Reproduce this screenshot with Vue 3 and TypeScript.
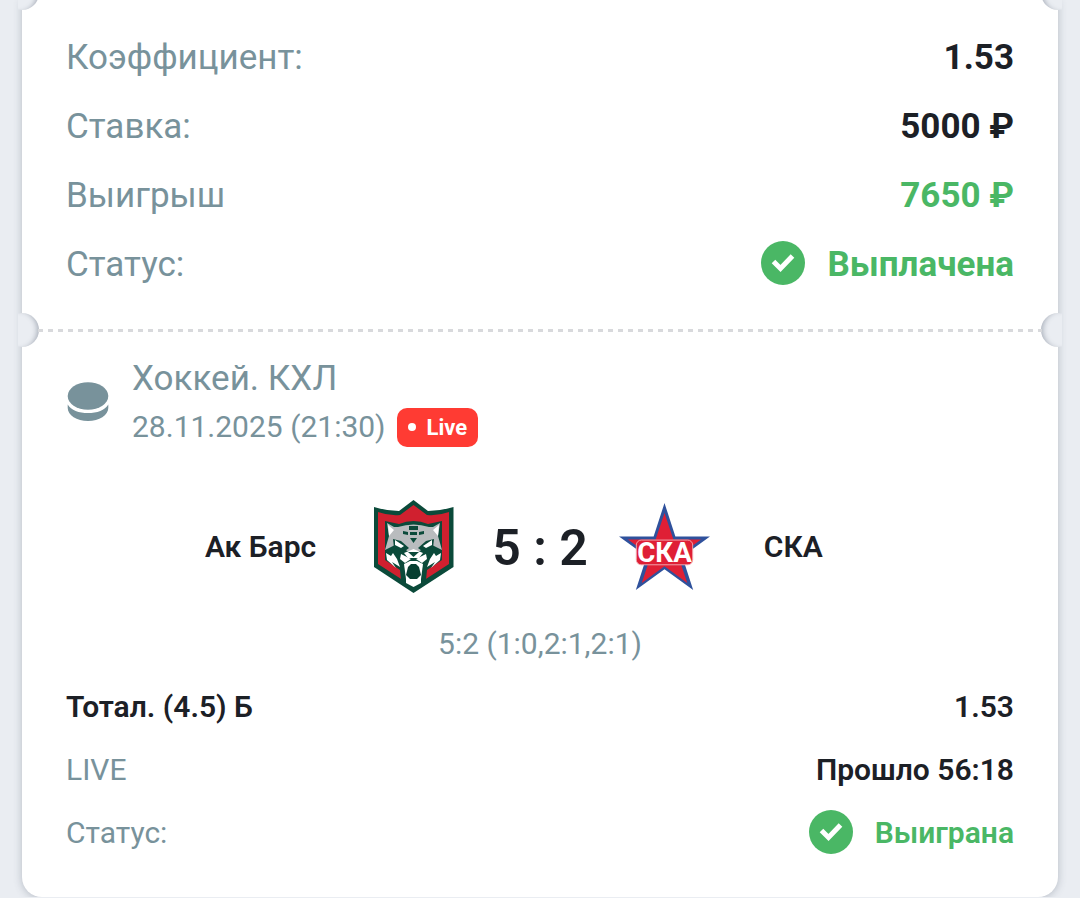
<script setup lang="ts">
interface Row {
  label: string
  value: string
  tone?: 'win'
  check?: boolean
  strong?: boolean
}

const summary: Row[] = [
  { label: 'Коэффициент:', value: '1.53' },
  { label: 'Ставка:', value: '5000 ₽' },
  { label: 'Выигрыш', value: '7650 ₽', tone: 'win' },
  { label: 'Статус:', value: 'Выплачена', tone: 'win', check: true },
]

const outcome: Row[] = [
  { label: 'Тотал. (4.5) Б', value: '1.53', strong: true },
  { label: 'LIVE', value: 'Прошло 56:18' },
  { label: 'Статус:', value: 'Выиграна', tone: 'win', check: true },
]
</script>

<template>
  <main class="page">
    <article class="ticket">
      <div class="notches notches-top"><i class="notch left"></i><i class="notch right"></i></div>

      <dl class="rows summary">
        <div v-for="row in summary" :key="row.label" class="row">
          <dt>{{ row.label }}</dt>
          <dd :class="row.tone">
            <svg v-if="row.check" class="check" viewBox="0 0 44 44" aria-hidden="true">
              <circle cx="22" cy="22" r="22" fill="#4ab765" />
              <path d="M12.5 20.5L19.5 27.5L31.5 15" fill="none" stroke="#fff" stroke-width="5" />
            </svg>
            {{ row.value }}
          </dd>
        </div>
      </dl>

      <div class="notches"><i class="notch left"></i><i class="notch right"></i><div class="dashes"></div></div>

      <section class="event">
        <header class="head">
          <svg class="puck" viewBox="0 0 42 40" aria-hidden="true">
            <ellipse cx="22" cy="14" rx="20.3" ry="13.7" fill="#78929b" />
            <path d="M1.700 22.500C5 28.500 13 31 22 31S39 28.500 42.300 22.500V26C42.300 33 33.300 39 22 39S1.700 33 1.700 26Z" fill="#78929b" />
          </svg>
          <div>
            <h2>Хоккей. КХЛ</h2>
            <p class="date"><time datetime="2025-11-28T21:30">28.11.2025 (21:30)</time><span class="live"><i></i>Live</span></p>
          </div>
        </header>

        <div class="match">
          <div class="team home">
            <b>Ак Барс</b>
            <svg class="logo bars" viewBox="0 0 80 94" aria-hidden="true">
              <path d="M39.500 0L54 11Q66 11 79.500 7V67L39.500 93L0 67V7Q13 11 25 11Z" fill="#0b4a3a" />
              <path d="M39.500 5L53 15Q64 16 75 12V64L39.500 87L4 64V12Q15 16 26 15Z" fill="#d0202f" />
              <path d="M11 21L25 24Q39.500 18 54 24L68 21V60L53 70L52 80L39.500 88L27 80L26 70L11 60Z" fill="#0b4a3a" />
              <path d="M13 23L20 27L24 27Q39.500 22 55 27L59 27L66 23L64 36L68 50L54 43L46 51H33L25 43L11 50L15 36Z" fill="#b9bcbe" />
              <path d="M14 25L20 30L15 36ZM65 25L59 30L64 36Z" fill="#fff" />
              <path d="M35 26H44V30H35ZM29 31L34 32V35L29 34ZM50 31L45 32V35L50 34ZM36 32H43V35H36ZM36 38H43L39.500 43Z" fill="#0b4a3a" />
              <path d="M19 39L27 41L35 48L31 51L20 48ZM60 39L52 41L44 48L48 51L59 48Z" fill="#0b4a3a" />
              <path d="M21 40L30 46L27 48L21 45ZM58 40L49 46L52 48L58 45Z" fill="#fff" />
              <path d="M30 53L39.500 49L49 53L45 58H34Z" fill="#fff" />
              <path d="M34 52H45L39.500 57Z" fill="#0b4a3a" />
              <path d="M27 54L37 59L31 63L26 59ZM52 54L42 59L48 63L53 59Z" fill="#fff" />
              <path d="M12 53L17 56L19 53L23 59L26 67L18 62L22 68L13 60ZM67 53L62 56L60 53L56 59L53 67L61 62L57 68L66 60Z" fill="#fff" />
              <path d="M30 64L36 61H43L49 64L47 79L43 81H36L32 79Z" fill="#fff" />
              <path d="M34 67L37 64H42L45 67L47 75L43 79H36L32 75Z" fill="#073f31" />
              <path d="M32 77L36 80H43L47 77V83L39.500 87L32 83Z" fill="#fff" />
            </svg>
          </div>
          <strong class="score">5 : 2</strong>
          <div class="team away">
            <svg class="logo ska" viewBox="0 0 92 88" role="img" aria-label="СКА">
              <path d="M46 0L57 34H92L64 54L75 88L46 67L17 88L28 54L0 34H35Z" fill="#2f519c" />
              <path d="M46 10L55 37H83L60 53.500L69 81L46 64L23 81L32 53.500L9 37H37Z" fill="#df1f35" />
              <rect x="17.500" y="37.500" width="57" height="25" rx="5" fill="#df1f35" stroke="#f0a3ab" stroke-width="1" />
              <text x="46" y="60" text-anchor="middle" class="ska-name">СКА</text>
            </svg>
            <b>СКА</b>
          </div>
        </div>

        <p class="periods">5:2 (1:0,2:1,2:1)</p>

        <dl class="rows outcome">
          <div v-for="row in outcome" :key="row.label" class="row">
            <dt :class="{ strong: row.strong }">{{ row.label }}</dt>
            <dd :class="row.tone">
              <svg v-if="row.check" class="check" viewBox="0 0 44 44" aria-hidden="true">
                <circle cx="22" cy="22" r="22" fill="#4ab765" />
                <path d="M12.500 20.500L19.500 27.500L31.500 15" fill="none" stroke="#fff" stroke-width="5" />
              </svg>
              {{ row.value }}
            </dd>
          </div>
        </dl>
      </section>
    </article>
  </main>
</template>

<style>
body {
  background: #eaedf2;
  overflow: hidden;
}
</style>

<style scoped>
.page {
  padding: 0 22px;
  overflow: hidden;
  font-family: Roboto, "Liberation Sans", sans-serif;
  color: #1c2026;
}
.ticket {
  background: #fff;
  border-radius: 0 0 20px 20px;
  box-shadow: 0 1px 8px rgba(60, 72, 92, 0.3);
}
.notches {
  position: relative;
  height: 0;
}
.notches-top {
  top: -7px;
}
.notch {
  position: absolute;
  top: -17px;
  width: 34px;
  height: 34px;
  border-radius: 50%;
  background: #eaedf2;
}
.notch.left {
  left: -17px;
  box-shadow: inset -5px 0 5px -3px rgba(60, 72, 92, 0.35);
  clip-path: inset(0 0 0 13px);
}
.notch.right {
  right: -17px;
  box-shadow: inset 5px 0 5px -3px rgba(60, 72, 92, 0.35);
  clip-path: inset(0 13px 0 0);
}
.dashes {
  position: absolute;
  top: -1px;
  left: 16px;
  right: 16px;
  height: 3px;
  background: repeating-linear-gradient(90deg, #d8d9dc 0 5px, transparent 5px 10px);
}
.rows {
  margin: 0;
  display: flex;
  flex-direction: column;
}
.row {
  display: flex;
  justify-content: space-between;
}
.summary {
  gap: 21px;
  padding: 34px 44px 41px;
  font-size: 35px;
  line-height: 48px;
}
.outcome {
  gap: 17px;
  font-size: 30px;
  line-height: 46px;
}
dt {
  color: #78929b;
}
dt.strong {
  color: #1c2026;
  font-weight: 600;
}
dd {
  margin: 0;
  display: flex;
  align-items: flex-start;
  gap: 22px;
  font-weight: 600;
}
.summary dd {
  font-weight: 700;
}
.win {
  color: #4ab765;
}
.check {
  width: 44px;
  height: 44px;
}
.event {
  padding: 26px 44px 41px;
}
.head {
  display: flex;
  align-items: flex-start;
  gap: 24px;
  color: #78929b;
}
.puck {
  width: 42px;
  height: 40px;
  margin-top: 26px;
  overflow: visible;
}
h2 {
  margin: 0;
  font-size: 35px;
  line-height: 46px;
  font-weight: 400;
}
.date {
  margin: 0;
  display: flex;
  align-items: center;
  gap: 11px;
  font-size: 30px;
  line-height: 50px;
}
.live {
  display: flex;
  align-items: center;
  gap: 11px;
  padding: 0 11px;
  border-radius: 10px;
  background: #ff3b33;
  color: #fff;
  font-size: 22px;
  line-height: 39px;
  font-weight: 700;
}
.live i {
  width: 8px;
  height: 8px;
  border-radius: 50%;
  background: #fff;
}
.match {
  display: grid;
  grid-template-columns: 1fr auto 1fr;
  align-items: center;
  column-gap: 31px;
  padding-top: 43px;
  line-height: 100px;
}
.team {
  display: flex;
  align-items: center;
  font-size: 30px;
}
.team b {
  font-weight: 600;
}
.home {
  justify-content: flex-end;
  gap: 58px;
  padding-right: 7px;
}
.away {
  gap: 54px;
}
.bars {
  width: 80px;
  height: 94px;
}
.ska {
  width: 91px;
  height: 87px;
}
.ska-name {
  font-size: 28px;
  font-weight: 700;
  fill: #fff;
}
.score {
  padding-top: 3px;
  font-size: 50px;
  font-weight: 600;
}
.periods {
  margin: 0;
  padding: 23px 0 17px;
  color: #78929b;
  text-align: center;
  font-size: 30px;
  line-height: 46px;
}
</style>
